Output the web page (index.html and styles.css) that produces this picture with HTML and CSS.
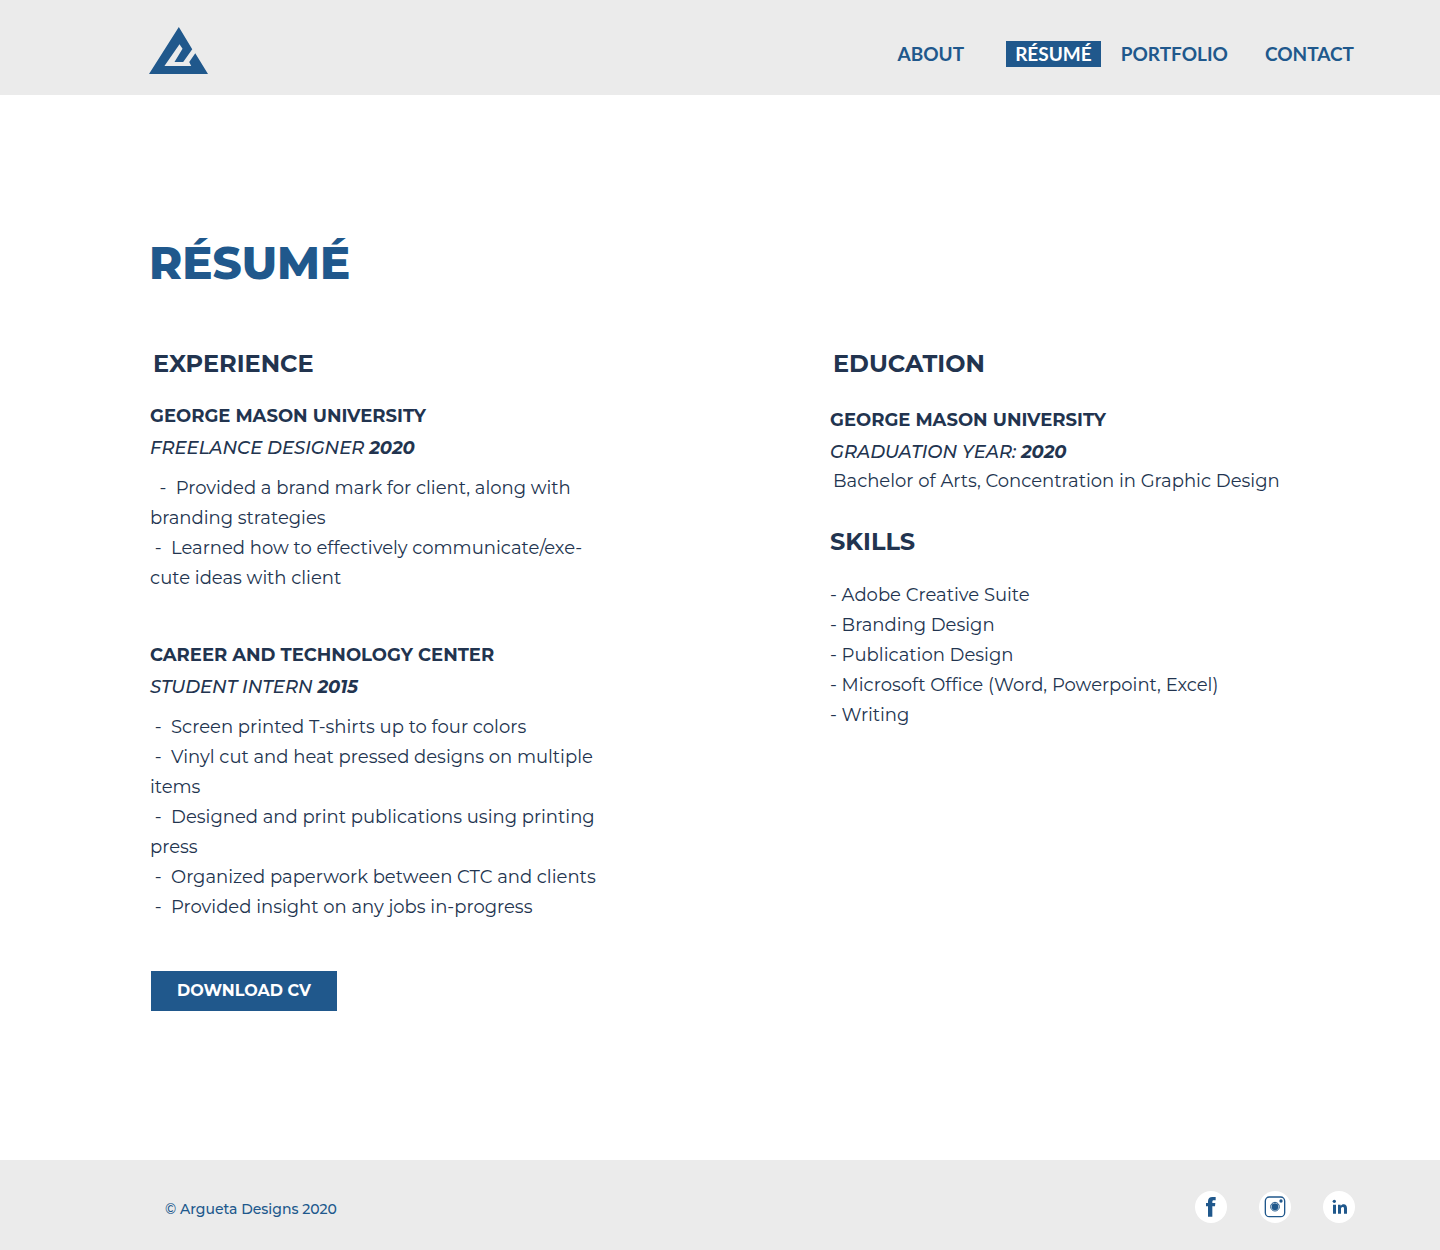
FILE: index.html
```html
<!DOCTYPE html>
<html lang="en">
<head>
<meta charset="utf-8">
<meta name="viewport" content="width=device-width, initial-scale=1">
<title>Résumé | Argueta Designs</title>
<link rel="stylesheet" href="styles.css">
</head>
<body>
<header class="site-header">
  <a class="logo" href="#" aria-label="Home">
    <svg viewBox="0 0 176 140" width="59" height="47" aria-hidden="true"><path d="M89 0L129 66L102 104H76L100 65L91 51L46 116H126L120 104L138 78L176 140H0Z" fill="currentColor"/></svg>
  </a>
  <nav class="nav">
    <a class="nav-link nav-first" href="#">ABOUT</a>
    <a class="nav-link active" href="#">RÉSUMÉ</a>
    <a class="nav-link" href="#">PORTFOLIO</a>
    <a class="nav-link nav-last" href="#">CONTACT</a>
  </nav>
</header>
<main class="main">
  <h1 class="title">RÉSUMÉ</h1>
  <div class="columns">
    <section class="experience">
      <h2 class="heading indented">EXPERIENCE</h2>
      <article class="job">
        <h3 class="org">GEORGE MASON UNIVERSITY</h3>
        <p class="role">FREELANCE DESIGNER <strong>2020</strong></p>
        <ul class="list">
          <li>  -  Provided a brand mark for client, along with<br>branding strategies</li>
          <li> -  Learned how to effectively communicate/exe-<br>cute ideas with client</li>
        </ul>
      </article>
      <article class="job">
        <h3 class="org">CAREER AND TECHNOLOGY CENTER</h3>
        <p class="role">STUDENT INTERN <strong>2015</strong></p>
        <ul class="list">
          <li> -  Screen printed T-shirts up to four colors</li>
          <li> -  Vinyl cut and heat pressed designs on multiple<br>items</li>
          <li> -  Designed and print publications using printing<br>press</li>
          <li> -  Organized paperwork between CTC and clients</li>
          <li> -  Provided insight on any jobs in-progress</li>
        </ul>
      </article>
      <button class="download" type="button">DOWNLOAD CV</button>
    </section>
    <div class="side">
      <section class="education">
        <h2 class="heading indented">EDUCATION</h2>
        <h3 class="org">GEORGE MASON UNIVERSITY</h3>
        <p class="role">GRADUATION YEAR: <strong>2020</strong></p>
        <p class="degree">Bachelor of Arts, Concentration in Graphic Design</p>
      </section>
      <section class="skills">
        <h2 class="heading">SKILLS</h2>
        <ul class="list">
          <li>- Adobe Creative Suite</li>
          <li>- Branding Design</li>
          <li>- Publication Design</li>
          <li>- Microsoft Office (Word, Powerpoint, Excel)</li>
          <li>- Writing</li>
        </ul>
      </section>
    </div>
  </div>
</main>
<footer class="site-footer">
  <p class="copyright">© Argueta Designs 2020</p>
  <div class="social">
    <a class="social-link" href="#" aria-label="Facebook">
      <svg viewBox="0 0 96 96" aria-hidden="true"><path d="M39 77V46H33V36H39V31C39 22 44 18 52 18H62V28H56C53 28 52 30 52 33V36H61L60 46H52V77Z" fill="currentColor"/></svg>
    </a>
    <a class="social-link" href="#" aria-label="Instagram">
      <svg viewBox="0 0 96 96" aria-hidden="true"><rect x="19" y="18" width="58" height="59" rx="12" fill="none" stroke="currentColor" stroke-width="4"/><circle cx="48" cy="47" r="13" fill="none" stroke="currentColor" stroke-width="3"/><circle cx="48" cy="47" r="10" fill="currentColor"/><circle cx="66" cy="30" r="5" fill="currentColor"/></svg>
    </a>
    <a class="social-link" href="#" aria-label="LinkedIn">
      <svg viewBox="0 0 96 96" aria-hidden="true"><g fill="currentColor"><circle cx="34" cy="31" r="5"/><path d="M30 41H39V68H30ZM45 41H53V45C55 42 58 40 62 40C69 40 72 45 72 52V68H63V54C63 50 62 48 59 48C55 48 54 51 54 54V68H45Z"/></g></svg>
    </a>
  </div>
</footer>
</body>
</html>
```
FILE: styles.css
```css
* { box-sizing: border-box; margin: 0; padding: 0; }

body {
  min-height: 100vh;
  display: flex;
  flex-direction: column;
  background: #fff;
  color: #22344f;
  font-family: Montserrat, Inter, sans-serif;
}

a { color: #20588c; text-decoration: none; }

.site-header,
.site-footer {
  display: flex;
  align-items: center;
  justify-content: space-between;
  background: #ebebeb;
}

.site-header { height: 95px; padding: 6px 77px 0 149px; }
.logo svg { display: block; }

.nav { display: flex; gap: 11px; padding-top: 7px; }
.nav-link {
  padding: 0 9px;
  font: 700 19px/26px "Gill Sans", "Gill Sans MT", Lato, sans-serif;
}
.nav-first { margin-right: 22px; }
.nav-last { margin-left: 8px; }
.nav-link.active { background: #20588c; color: #fff; }

.main { flex: 1; padding: 138px 80px 149px 150px; }

.title {
  margin: 0 0 56px -1px;
  color: #20588c;
  font-size: 45px;
  font-weight: 800;
  line-height: 60px;
}

.columns { display: grid; grid-template-columns: 1fr 1fr; gap: 150px; }

.heading { margin-bottom: 21px; font-size: 24px; font-weight: 700; line-height: 30px; }
.indented { padding-left: 3px; }
.education .heading { margin-bottom: 25px; }
.skills .heading { margin-bottom: 23px; }

.org { font-size: 18px; font-weight: 700; line-height: 32px; }
.role { font-size: 18px; font-style: italic; font-weight: 500; line-height: 32px; }
.job .role { margin-bottom: 9px; }
.job + .job { margin-top: 46px; }

.list { list-style: none; font-size: 18px; line-height: 30px; }
.list li { white-space: pre-wrap; }
.degree { padding-left: 3px; font-size: 18px; line-height: 26px; }
.skills { margin-top: 33px; }

.download {
  min-width: 186px;
  height: 40px;
  margin: 49px 0 0 1px;
  border: 0;
  background: #20588c;
  color: #fff;
  font: 700 16px/24px Montserrat, Inter, sans-serif;
}

.site-footer { height: 90px; padding: 4px 85px 0 165px; }
.copyright { padding-top: 3px; color: #20588c; font-size: 14px; font-weight: 500; line-height: 20px; }
.social { display: flex; gap: 32px; }
.social-link { width: 32px; height: 32px; border-radius: 50%; background: #fff; }
.social-link svg { display: block; width: 32px; height: 32px; }
```
